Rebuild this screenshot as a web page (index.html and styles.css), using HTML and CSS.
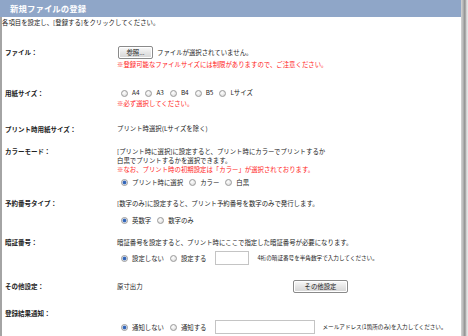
FILE: index.html
```html
<!DOCTYPE html>
<html lang="ja">
    <head>
        <meta charset="UTF-8" />
        <title>新規ファイルの登録</title>
        <link rel="stylesheet" href="styles.css">
    </head>
    <body>
        <div class="wrap">
            <main class="panel">
                <header class="head">新規ファイルの登録</header>
                <section class="body">
                    <p class="intro">各項目を設定し、[登録する]をクリックしてください。</p>

                    <div class="row r-file">
                        <div class="lbl h14">ファイル：</div>
                        <div class="val">
                            <div class="ctl">
                                <button class="btn btn-ref" type="button">参照...</button>
                                <span class="msg">ファイルが選択されていません。</span>
                            </div>
                            <div class="line warn w1">※登録可能なファイルサイズには制限がありますので、ご注意ください。</div>
                        </div>
                    </div>

                    <div class="row r-paper">
                        <div class="lbl h12">用紙サイズ：</div>
                        <div class="val">
                            <div class="ctl h12 radios">
                                <label class="rd"><i></i>A4</label>
                                <label class="rd"><i></i>A3</label>
                                <label class="rd"><i></i>B4</label>
                                <label class="rd"><i></i>B5</label>
                                <label class="rd"><i></i>Lサイズ</label>
                            </div>
                            <div class="line warn">※必ず選択してください。</div>
                        </div>
                    </div>

                    <div class="row r-print">
                        <div class="lbl h10">プリント時用紙サイズ：</div>
                        <div class="val">
                            <div class="line h10">プリント時選択(Lサイズを除く)</div>
                        </div>
                    </div>

                    <div class="row r-color">
                        <div class="lbl h9">カラーモード：</div>
                        <div class="val">
                            <div class="line">[プリント時に選択]に設定すると、プリント時にカラーでプリントするか</div>
                            <div class="line">白黒でプリントするかを選択できます。</div>
                            <div class="line warn">※なお、プリント時の初期設定は「カラー」が選択されております。</div>
                            <div class="ctl radios m2">
                                <label class="rd on"><i></i>プリント時に選択</label>
                                <label class="rd"><i></i>カラー</label>
                                <label class="rd"><i></i>白黒</label>
                            </div>
                        </div>
                    </div>

                    <div class="row r-num">
                        <div class="lbl h9">予約番号タイプ：</div>
                        <div class="val">
                            <div class="line">[数字のみ]に設定すると、プリント予約番号を数字のみで発行します。</div>
                            <div class="ctl radios m5">
                                <label class="rd on"><i></i>英数字</label>
                                <label class="rd"><i></i>数字のみ</label>
                            </div>
                        </div>
                    </div>

                    <div class="row r-pin">
                        <div class="lbl h9">暗証番号：</div>
                        <div class="val">
                            <div class="line">暗証番号を設定すると、プリント時にここで指定した暗証番号が必要になります。</div>
                            <div class="ctl radios m4">
                                <label class="rd on"><i></i>設定しない</label>
                                <label class="rd"><i></i>設定する</label>
                                <input class="box box-pin" type="text" />
                                <span class="note">4桁の暗証番号を半角数字で入力してください。</span>
                            </div>
                        </div>
                    </div>

                    <div class="row r-other">
                        <div class="lbl h14">その他設定：</div>
                        <div class="val">
                            <div class="ctl">
                                <span class="fixed">原寸出力</span>
                                <button class="btn btn-other" type="button">その他設定</button>
                            </div>
                        </div>
                    </div>

                    <div class="row r-mail">
                        <div class="lbl h10">登録結果通知：</div>
                        <div class="val">
                            <div class="line h10"></div>
                            <div class="ctl radios m2">
                                <label class="rd on"><i></i>通知しない</label>
                                <label class="rd"><i></i>通知する</label>
                                <input class="box box-mail" type="text" />
                                <span class="note">メールアドレス(1箇所のみ)を入力してください。</span>
                            </div>
                        </div>
                    </div>
                </section>
            </main>
            <div class="rail"></div>
        </div>
    </body>
</html>
```

FILE: styles.css
```css
:root {
    --head: #8fa6c8;
    --text: #222;
    --warn: #ff1a1a;
    --rule: #a4a4a4;
}
html,
body {
    margin: 0;
    height: 100%;
    background: #fff;
    font-family: "Noto Sans CJK JP", "Noto Sans", sans-serif;
    color: var(--text);
    font-size: 6.4px;
}
.wrap {
    display: flex;
    width: 468px;
    height: 336px;
    overflow: hidden;
}
.panel {
    width: 461px;
    display: flex;
    flex-direction: column;
}
.rail {
    width: 7px;
    background: linear-gradient(to right, #d4d4d4 0, #b8b8b8 2px, #8c8c8c 4px, #c9c9c9 5px, #ececec 7px);
}
.head {
    height: 17px;
    line-height: 17px;
    background: var(--head);
    color: #fff;
    font-weight: 700;
    font-size: 8.4px;
    padding-left: 10px;
    letter-spacing: 0.1px;
}
.body {
    flex: 1;
    border-left: 2px solid var(--rule);
    padding-top: 1px;
}
.intro {
    margin: 0;
    line-height: 10px;
}
.row {
    display: grid;
    grid-template-columns: 112px 1fr;
    padding-left: 3px;
}
.lbl {
    font-weight: 700;
    font-size: 6.5px;
    white-space: nowrap;
}
.h14 { line-height: 14px; }
.h12 { line-height: 12px; height: 12px; }
.h10 { line-height: 10px; height: 10px; }
.h9 { line-height: 9px; }
.line {
    line-height: 9px;
    white-space: nowrap;
}
.warn {
    color: var(--warn);
}
.w1 {
    line-height: 10px;
    margin-top: 1px;
}
.ctl {
    height: 14px;
    display: flex;
    align-items: center;
    white-space: nowrap;
}
.ctl.h12 { height: 12px; }
.m2 { margin-top: 2px; }
.m4 { margin-top: 4.5px; }
.m5 { margin-top: 5.5px; }

.r-file { margin-top: 17px; }
.r-paper { margin-top: 17px; }
.r-print { margin-top: 16px; }
.r-color { margin-top: 12.5px; }
.r-num { margin-top: 9px; }
.r-pin { margin-top: 10.5px; }
.r-other { margin-top: 14px; }
.r-mail { margin-top: 15px; }

.btn {
    font-family: inherit;
    font-size: 6.4px;
    color: #222;
    height: 13px;
    padding: 0;
    border: 1px solid #8a8a8a;
    border-radius: 2px;
    background: linear-gradient(#fafafa, #e4e4e4 55%, #d6d6d6);
    box-shadow: inset 0 0 0 1px #fff;
}
.btn-ref {
    width: 35px;
    margin-left: 1px;
}
.msg {
    margin-left: 4px;
}
.btn-other {
    width: 55px;
}
.fixed {
    width: 176px;
}
.radios {
    padding-left: 4px;
    gap: 6px;
}
.rd {
    display: flex;
    align-items: center;
    gap: 4px;
}
.rd i {
    width: 5px;
    height: 5px;
    border-radius: 50%;
    border: 0.6px solid #9a9a9a;
    background: radial-gradient(circle at 40% 35%, #fff 0, #e6e6e6 60%, #cfcfcf 100%);
}
.rd.on i {
    background: radial-gradient(circle, #2c5fb0 0, #3d6fc0 1.6px, #dfe6f2 2.2px, #e8e8e8 100%);
}
.box {
    height: 14px;
    box-sizing: border-box;
    border: 1px solid #c4c4c4;
    background: #fff;
    padding: 0;
    margin: 0 0 0 2px;
}
.box-pin {
    width: 34px;
}
.box-mail {
    width: 100px;
}
.note {
    font-size: 5.6px;
    margin-left: 3px;
}
.r-mail .note {
    margin-left: 2px;
}
```
